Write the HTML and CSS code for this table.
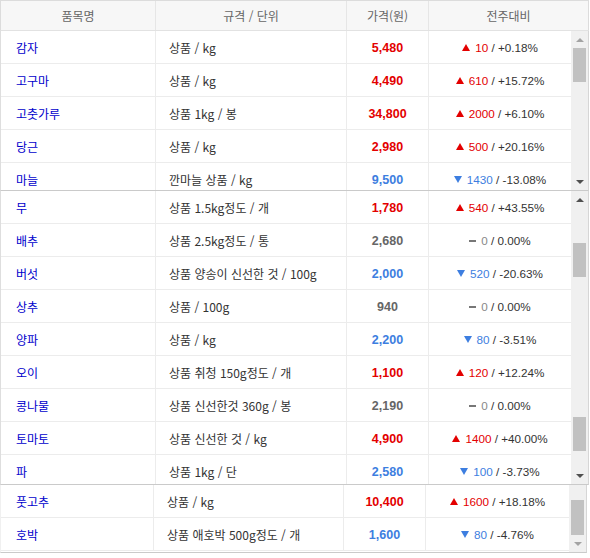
FILE: index.html
```html
<!DOCTYPE html>
<html lang="ko">
<head>
<meta charset="utf-8">
<title>농산물 가격</title>
<link rel="stylesheet" href="styles.css">
</head>
<body>
<div class="table">
  <div class="head">
    <div class="hc">품목명</div>
    <div class="hc">규격 / 단위</div>
    <div class="hc">가격(원)</div>
    <div class="hc last">전주대비</div>
  </div>

  <div class="block b1">
    <div class="viewport">
      <div class="row"><div class="c name">감자</div><div class="c spec">상품 / kg</div><div class="c price up">5,480</div><div class="c chg"><span class="num up"><i class="t-up"></i>10</span>&nbsp;/ +0.18%</div></div>
      <div class="row"><div class="c name">고구마</div><div class="c spec">상품 / kg</div><div class="c price up">4,490</div><div class="c chg"><span class="num up"><i class="t-up"></i>610</span>&nbsp;/ +15.72%</div></div>
      <div class="row"><div class="c name">고춧가루</div><div class="c spec">상품 1kg / 봉</div><div class="c price up">34,800</div><div class="c chg"><span class="num up"><i class="t-up"></i>2000</span>&nbsp;/ +6.10%</div></div>
      <div class="row"><div class="c name">당근</div><div class="c spec">상품 / kg</div><div class="c price up">2,980</div><div class="c chg"><span class="num up"><i class="t-up"></i>500</span>&nbsp;/ +20.16%</div></div>
      <div class="row"><div class="c name">마늘</div><div class="c spec">깐마늘 상품 / kg</div><div class="c price down">9,500</div><div class="c chg"><span class="num down"><i class="t-down"></i>1430</span>&nbsp;/ -13.08%</div></div>
    </div>
    <div class="sb">
      <div class="arr"><i class="a-up light"></i></div>
      <div class="thumb th1"></div>
      <div class="fill"></div>
      <div class="arr"><i class="a-down"></i></div>
    </div>
  </div>

  <div class="block b2">
    <div class="viewport">
      <div class="row"><div class="c name">무</div><div class="c spec">상품 1.5kg정도 / 개</div><div class="c price up">1,780</div><div class="c chg"><span class="num up"><i class="t-up"></i>540</span>&nbsp;/ +43.55%</div></div>
      <div class="row"><div class="c name">배추</div><div class="c spec">상품 2.5kg정도 / 통</div><div class="c price same">2,680</div><div class="c chg"><span class="num same"><i class="t-same"></i>0</span>&nbsp;/ 0.00%</div></div>
      <div class="row"><div class="c name">버섯</div><div class="c spec">상품 양송이 신선한 것 / 100g</div><div class="c price down">2,000</div><div class="c chg"><span class="num down"><i class="t-down"></i>520</span>&nbsp;/ -20.63%</div></div>
      <div class="row"><div class="c name">상추</div><div class="c spec">상품 / 100g</div><div class="c price same">940</div><div class="c chg"><span class="num same"><i class="t-same"></i>0</span>&nbsp;/ 0.00%</div></div>
      <div class="row"><div class="c name">양파</div><div class="c spec">상품 / kg</div><div class="c price down">2,200</div><div class="c chg"><span class="num down"><i class="t-down"></i>80</span>&nbsp;/ -3.51%</div></div>
      <div class="row"><div class="c name">오이</div><div class="c spec">상품 취청 150g정도 / 개</div><div class="c price up">1,100</div><div class="c chg"><span class="num up"><i class="t-up"></i>120</span>&nbsp;/ +12.24%</div></div>
      <div class="row"><div class="c name">콩나물</div><div class="c spec">상품 신선한것 360g / 봉</div><div class="c price same">2,190</div><div class="c chg"><span class="num same"><i class="t-same"></i>0</span>&nbsp;/ 0.00%</div></div>
      <div class="row"><div class="c name">토마토</div><div class="c spec">상품 신선한 것 / kg</div><div class="c price up">4,900</div><div class="c chg"><span class="num up"><i class="t-up"></i>1400</span>&nbsp;/ +40.00%</div></div>
      <div class="row"><div class="c name">파</div><div class="c spec">상품 1kg / 단</div><div class="c price down">2,580</div><div class="c chg"><span class="num down"><i class="t-down"></i>100</span>&nbsp;/ -3.73%</div></div>
    </div>
    <div class="sb">
      <div class="arr"><i class="a-up"></i></div>
      <div class="gap35"></div>
      <div class="thumb th2"></div>
      <div class="fill"></div>
      <div class="thumb th2"></div>
      <div class="gap16"></div>
      <div class="arr"><i class="a-down"></i></div>
    </div>
  </div>

  <div class="block b3">
    <div class="viewport">
      <div class="row"><div class="c name">풋고추</div><div class="c spec">상품 / kg</div><div class="c price up">10,400</div><div class="c chg"><span class="num up"><i class="t-up"></i>1600</span>&nbsp;/ +18.18%</div></div>
      <div class="row"><div class="c name">호박</div><div class="c spec">상품 애호박 500g정도 / 개</div><div class="c price down">1,600</div><div class="c chg"><span class="num down"><i class="t-down"></i>80</span>&nbsp;/ -4.76%</div></div>
    </div>
    <div class="sb">
      <div class="gap15"></div>
      <div class="thumb th3"></div>
      <div class="fill"></div>
      <div class="arr"><i class="a-down light"></i></div>
    </div>
  </div>
</div>
</body>
</html>
```

FILE: styles.css
```css
* { box-sizing: border-box; margin: 0; padding: 0; }
html, body { background: #fff; }
body {
  margin: 0;
  font-family: "Noto Sans CJK KR", "Noto Sans", sans-serif;
  font-size: 12px;
  color: #333;
}
.table { width: 589px; }

.head {
  display: grid;
  grid-template-columns: 155px 191px 82px 1fr;
  height: 31px;
  border: 1px solid #dcdcdc;
  border-bottom-color: #e2e2e2;
  background: #f7f7f7;
}
.hc {
  display: flex;
  align-items: center;
  justify-content: center;
  color: #666;
  font-size: 12px;
  border-right: 1px solid #e6e6e6;
}
.hc.last { border-right: none; }

.block {
  display: flex;
  border-left: 1px solid #dedede;
  border-right: 1px solid #d6d6d6;
  border-bottom: 1px solid #cacaca;
}
.viewport { flex: 1; overflow: hidden; }
.b1 .viewport, .b1 .sb { height: 159px; }
.b2 .viewport, .b2 .sb { height: 293px; }
.b3 .viewport, .b3 .sb { height: 67px; }
.b3 { width: 587px; border-left-color: #f0f0f0; }

.row {
  display: grid;
  grid-template-columns: 155px 191px 82px 1fr;
  height: 33px;
  border-bottom: 1px solid #ececec;
}
.b3 .row { grid-template-columns: 153px 190px 82px 1fr; }
.c {
  display: flex;
  align-items: center;
  border-right: 1px solid #ececec;
  white-space: nowrap;
}
.c.chg { border-right: none; }
.name { padding-left: 15px; color: #0000cc; }
.spec { padding-left: 13px; color: #333; }
.price {
  justify-content: center;
  font-family: "Liberation Sans", Arial, sans-serif;
  font-weight: bold;
  font-size: 12.5px;
  padding-top: 1px;
}
.price.up { color: #e30000; }
.price.down { color: #3d7ee0; }
.price.same { color: #666; }

.chg {
  justify-content: center;
  font-family: "Liberation Sans", Arial, sans-serif;
  font-size: 11.7px;
  color: #333;
  padding-top: 1px;
}
.num { display: inline-flex; align-items: center; }
.num.up { color: #e30000; }
.num.down { color: #3d7ee0; }
.num.same { color: #888; }
.t-up {
  display: inline-block;
  width: 0; height: 0;
  border-left: 4px solid transparent;
  border-right: 4px solid transparent;
  border-bottom: 7px solid #e30000;
  margin-right: 5px;
}
.t-down {
  display: inline-block;
  width: 0; height: 0;
  border-left: 4px solid transparent;
  border-right: 4px solid transparent;
  border-top: 7px solid #3d7ee0;
  margin-right: 5px;
}
.t-same {
  display: inline-block;
  width: 7px; height: 2px;
  background: #777;
  margin-right: 5px;
}

.sb {
  width: 17px;
  flex: none;
  background: #f0f0f0;
  display: flex;
  flex-direction: column;
  align-items: center;
}
.arr {
  width: 17px;
  height: 17px;
  flex: none;
  display: flex;
  align-items: center;
  justify-content: center;
}
.a-up, .a-down {
  display: block;
  width: 0; height: 0;
  border-left: 4px solid transparent;
  border-right: 4px solid transparent;
}
.a-up { border-bottom: 4px solid #505050; }
.a-down { border-top: 4px solid #505050; }
.a-up.light { border-bottom-color: #a3a3a3; }
.a-down.light { border-top-color: #a3a3a3; }
.thumb {
  width: 13px;
  flex: none;
  background: #c1c1c1;
}
.th1 { height: 34px; }
.th2 { height: 34px; }
.th3 { height: 35px; }
.fill { flex: 1; }
.gap35 { height: 35px; flex: none; }
.gap16 { height: 16px; flex: none; }
.gap15 { height: 15px; flex: none; }
```
